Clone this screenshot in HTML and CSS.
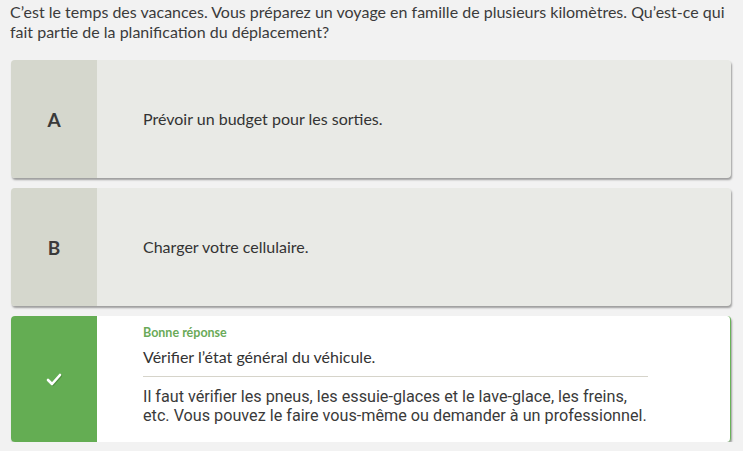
FILE: index.html
```html
<!DOCTYPE html>
<html lang="fr">
<head>
<meta charset="utf-8">
<link rel="stylesheet" href="styles.css">
</head>
<body>
<main class="quiz">
  <p class="question">C’est le temps des vacances. Vous préparez un voyage en famille de plusieurs kilomètres. Qu’est-ce qui fait partie de la planification du déplacement?</p>
  <div class="choices">
    <div class="choice">
      <div class="letter">A</div>
      <div class="body"><p class="answer">Prévoir un budget pour les sorties.</p></div>
    </div>
    <div class="choice">
      <div class="letter">B</div>
      <div class="body"><p class="answer">Charger votre cellulaire.</p></div>
    </div>
    <div class="choice correct">
      <div class="letter">
        <svg class="check" width="18" height="16" viewBox="0 0 18 16" aria-hidden="true">
          <path d="M3 9 L7 13 L15 4" fill="none" stroke="#3f7a33" stroke-opacity="0.55" stroke-width="2.6" stroke-linecap="round" stroke-linejoin="round" transform="translate(0.8 0.8)"/>
          <path d="M3 9 L7 13 L15 4" fill="none" stroke="#ffffff" stroke-width="2.6" stroke-linecap="round" stroke-linejoin="round"/>
        </svg>
      </div>
      <div class="body">
        <p class="status">Bonne réponse</p>
        <p class="answer">Vérifier l’état général du véhicule.</p>
        <p class="explain">Il faut vérifier les pneus, les essuie-glaces et le lave-glace, les freins,<br>etc. Vous pouvez le faire vous-même ou demander à un professionnel.</p>
      </div>
    </div>
  </div>
</main>
</body>
</html>
```
FILE: styles.css
```css
html, body {
  margin: 0;
  padding: 0;
  background: #f2f2f2;
}
body {
  font-family: Lato, "Liberation Sans", sans-serif;
  color: #333333;
}
.quiz {
  padding: 0 12px 0 10px;
}
.question {
  margin: 0;
  padding-top: 2px;
  font-size: 16px;
  line-height: 20px;
  color: #3b3b3b;
}
.choices {
  display: flex;
  flex-direction: column;
  gap: 10px;
  margin-top: 18px;
  padding-left: 1px;
}
.choice {
  display: flex;
  min-height: 118px;
  border-radius: 4px;
  overflow: hidden;
  background: #e9eae6;
  box-shadow: 1px 2px 2px rgba(0, 0, 0, 0.35);
}
.letter {
  flex: 0 0 86px;
  display: flex;
  align-items: center;
  justify-content: center;
  background: #d5d7cd;
  font-size: 19px;
  font-weight: 700;
  color: #3a3a3a;
}
.body {
  flex: 1;
  display: flex;
  flex-direction: column;
  justify-content: center;
  padding: 0 82px 0 46px;
}
.answer {
  margin: 0;
  font-size: 16px;
  line-height: 20px;
  color: #333333;
}
.correct {
  background: #ffffff;
  min-height: 126px;
  border-right: 1px solid #6ab25a;
}
.correct .letter {
  background: #64ad53;
}
.correct .body {
  justify-content: flex-start;
  padding-top: 9px;
}
.status {
  margin: 0 0 6px 0;
  font-size: 12.5px;
  line-height: 16px;
  font-weight: 700;
  color: #6aaa58;
}
.explain {
  margin: 9px 0 0 0;
  padding-top: 11px;
  border-top: 1px solid #d6d4ca;
  font-family: Roboto, "Noto Sans", sans-serif;
  font-size: 16.2px;
  line-height: 18.5px;
  white-space: nowrap;
  color: #3a3a3a;
}
.check {
  display: block;
}
```
